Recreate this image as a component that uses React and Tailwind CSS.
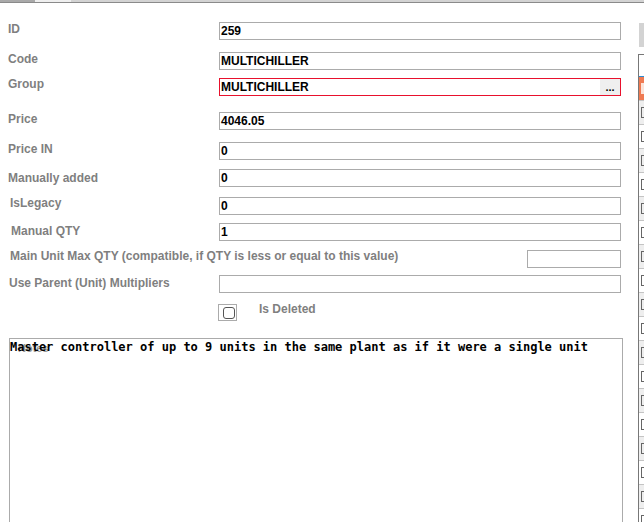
import React from 'react';

const Row = ({ h, labelCls = '', labelW = 'w-[219px]', label, children }) => (
  <div className={`flex items-start ${h}`}>
    <div className={`${labelW} shrink-0 text-[12px] font-bold leading-[14px] text-[#7f7f7f] ${labelCls}`}>
      {label}
    </div>
    {children}
  </div>
);

const Field = ({ value, className = 'w-[402px] border-[#ababab]' }) => (
  <div className={`h-[18px] shrink-0 border pl-[1px] text-[12px] font-bold leading-[16px] text-black ${className}`}>
    {value}
  </div>
);

const App = () => {
  const rows = Array.from({ length: 18 });

  return (
    <div className="relative h-[522px] w-[644px] overflow-hidden bg-white font-['Liberation_Sans',Arial,sans-serif]">
      {/* tab strip */}
      <div className="flex h-[2px]">
        <div className="w-[35px] bg-[#a9a9a9]"></div>
        <div className="w-[36px] bg-[#efefef]"></div>
        <div className="flex-1 bg-[#d3d3d3]"></div>
      </div>
      <div className="h-[1px] bg-[#8a8a8a]"></div>

      <div className="flex">
        {/* form */}
        <div className="w-[638px] shrink-0 pt-[19px]">
          <Row h="h-[30px]" labelCls="pl-[8px]" label="ID">
            <Field value="259" />
          </Row>
          <Row h="h-[26px]" labelCls="pl-[8px]" label="Code">
            <Field value="MULTICHILLER" />
          </Row>
          <Row h="h-[34px]" labelCls="pl-[8px] mt-[-1px]" label="Group">
            <div className="flex h-[18px] w-[402px] shrink-0 items-center justify-between border border-[#e8112d] pl-[1px] text-[12px] font-bold leading-[16px] text-black">
              <span>MULTICHILLER</span>
              <span className="flex h-full w-[20px] items-center justify-center bg-[#efefef] text-[11px] leading-none">...</span>
            </div>
          </Row>
          <Row h="h-[30px]" labelCls="pl-[8px]" label="Price">
            <Field value="4046.05" />
          </Row>
          <Row h="h-[27px]" labelCls="pl-[8px]" label="Price IN">
            <Field value="0" />
          </Row>
          <Row h="h-[28px]" labelCls="pl-[8px] mt-[2px]" label="Manually added">
            <Field value="0" />
          </Row>
          <Row h="h-[26px]" labelCls="pl-[10px] mt-[-1px]" label="IsLegacy">
            <Field value="0" />
          </Row>
          <Row h="h-[27px]" labelCls="pl-[11px] mt-[1px]" label="Manual QTY">
            <Field value="1" />
          </Row>
          <Row
            h="h-[25px]"
            labelW="w-[527px]"
            labelCls="pl-[10px] mt-[-1px]"
            label="Main Unit Max QTY (compatible, if QTY is less or equal to this value)"
          >
            <Field value="" className="w-[94px] border-[#ababab]" />
          </Row>
          <Row h="h-[26px]" labelCls="pl-[9px] mt-[1px]" label="Use Parent (Unit) Multipliers">
            <Field value="" />
          </Row>

          {/* is deleted */}
          <div className="flex h-[37px] items-start">
            <div className="w-[218px] shrink-0"></div>
            <div className="mt-[3px] flex h-[17px] w-[19px] items-start border border-[#ababab] pl-[4px] pt-[2px]">
              <div className="h-[12px] w-[12px] rounded-[3px] border border-[#555]"></div>
            </div>
            <span className="ml-[22px] mt-[1px] text-[12px] font-bold leading-[14px] text-[#7f7f7f]">Is Deleted</span>
          </div>

          {/* notes */}
          <div className="relative ml-[9px] h-[200px] w-[614px] border border-[#ababab] pt-[1px] font-['DejaVu_Sans_Mono',monospace] text-[12px] font-bold leading-[14px] text-black">
            <span className="absolute left-[8px] top-[2px] font-['Liberation_Sans',Arial,sans-serif] text-[11px] text-[#9a9a9a]">Notes</span>
            <span className="relative">Master controller of up to 9 units in the same plant as if it were a single unit</span>
          </div>
        </div>

        {/* right panel (cut off) */}
        <div className="w-[60px] shrink-0">
          <div className="ml-[1px] mt-[20px] h-[24px] bg-[#d3d3d3]"></div>
          <div className="mt-[7px] border-l border-t border-[#777]">
            <div className="h-[21px] bg-white"></div>
            <div className="h-[1px] bg-[#2b8cd3]"></div>
            <div className="h-[23px] bg-[#ef7a52] pl-[2px] pt-[6px]">
              <div className="h-[11px] w-[8px] bg-[#fbe3d9]"></div>
            </div>
            {rows.map((_, i) => (
              <div
                key={i}
                className={`h-[24px] border-t border-[#c4c4c4] pl-[2px] pt-[6px] ${i % 2 === 0 ? 'bg-[#eeeeee]' : 'bg-white'}`}
              >
                <div className="h-[11px] w-[8px] border border-[#666]"></div>
              </div>
            ))}
          </div>
        </div>
      </div>
    </div>
  );
};

export default App;
